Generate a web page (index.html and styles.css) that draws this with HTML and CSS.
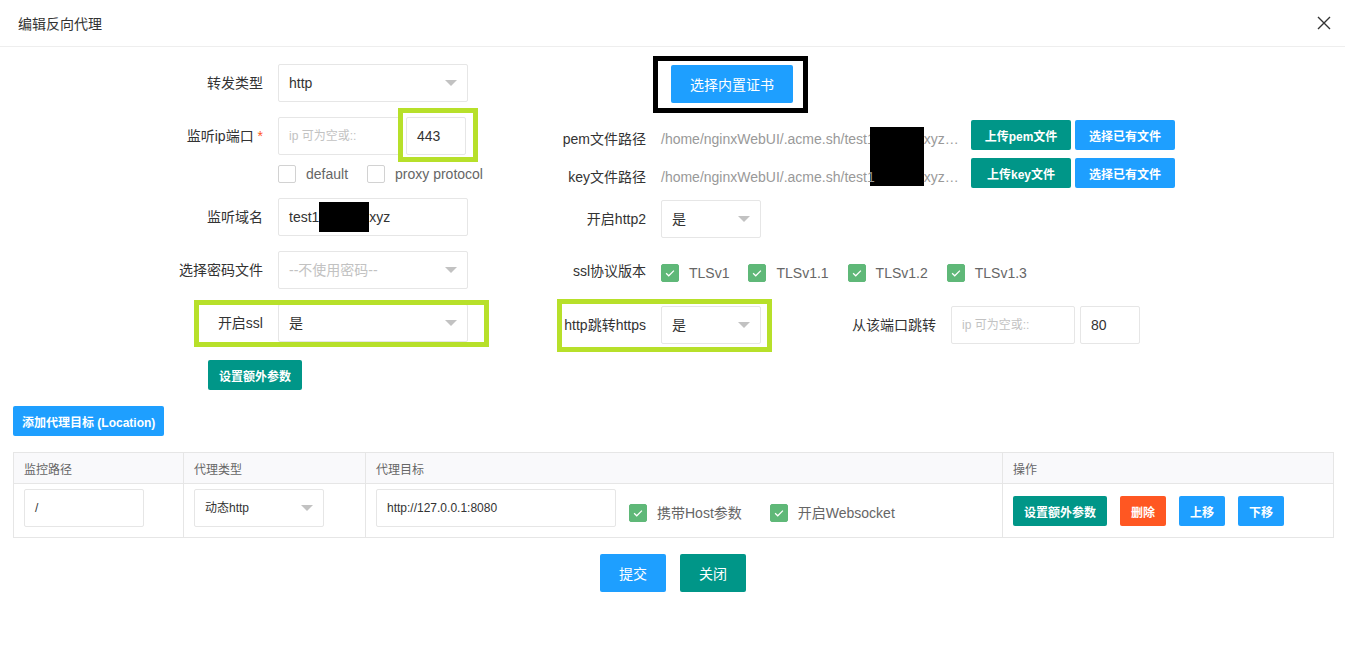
FILE: index.html
```html
<!DOCTYPE html>
<html lang="zh-CN">
<head>
<meta charset="utf-8">
<title>编辑反向代理</title>
<link rel="stylesheet" href="styles.css">
</head>
<body>
<div class="dialog">
  <div class="dlg-title">
    <span>编辑反向代理</span>
    <span class="dlg-close"><svg width="14" height="14" viewBox="0 0 14 14"><path d="M1 1L13 13M13 1L1 13" stroke="#333" stroke-width="1.4" fill="none"/></svg></span>
  </div>
  <div class="dlg-body">
    <div class="top">
      <div class="col-left">
        <div class="form-row">
          <label class="lbl">转发类型</label>
          <div class="select w190"><span>http</span><i class="edge"></i></div>
        </div>
        <div class="form-row mt15">
          <label class="lbl">监听ip端口 <span class="req">*</span></label>
          <div class="pair">
            <div class="input w124 ph">ip 可为空或::</div>
            <div class="annot-wrap">
              <div class="input w60">443</div>
              <span class="annot lime port-annot"></span>
            </div>
          </div>
        </div>
        <div class="check-row">
          <span class="cb"></span><span class="cb-text">default</span>
          <span class="cb"></span><span class="cb-text">proxy protocol</span>
        </div>
        <div class="form-row mt15">
          <label class="lbl">监听域名</label>
          <div class="input w190">test1<span class="redact-inline"></span>xyz</div>
        </div>
        <div class="form-row mt15">
          <label class="lbl">选择密码文件</label>
          <div class="select w190 disabled"><span>--不使用密码--</span><i class="edge"></i></div>
        </div>
        <div class="form-row mt15 annot-wrap">
          <label class="lbl">开启ssl</label>
          <div class="select w190"><span>是</span><i class="edge"></i></div>
          <span class="annot lime ssl-annot"></span>
        </div>
        <div class="extra-row">
          <button class="btn btn-sm teal">设置额外参数</button>
        </div>
      </div>

      <div class="col-mid">
        <div class="cert-row">
          <span class="annot-wrap">
            <button class="btn blue">选择内置证书</button>
            <span class="annot black cert-annot"></span>
          </span>
        </div>
        <div class="form-row pem-row">
          <label class="lbl">pem文件路径</label>
          <div class="path">/home/nginxWebUI/.acme.sh/test1<span class="gap"></span>xyz…<span class="redact-block"></span></div>
          <div class="file-btns">
            <button class="btn btn-sm btn-file teal">上传pem文件</button>
            <button class="btn btn-sm btn-file blue">选择已有文件</button>
          </div>
        </div>
        <div class="form-row">
          <label class="lbl">key文件路径</label>
          <div class="path">/home/nginxWebUI/.acme.sh/test1<span class="gap"></span>xyz…</div>
          <div class="file-btns">
            <button class="btn btn-sm btn-file teal">上传key文件</button>
            <button class="btn btn-sm btn-file blue">选择已有文件</button>
          </div>
        </div>
        <div class="form-row http2-row">
          <label class="lbl">开启http2</label>
          <div class="select w100"><span>是</span><i class="edge"></i></div>
        </div>
        <div class="form-row ssl-row">
          <label class="lbl">ssl协议版本</label>
          <div class="cb-group">
            <span class="cb on"><svg viewBox="0 0 18 18"><path d="M4.6 9.2L7.6 12.1L13.4 6.3" stroke="#fff" stroke-width="1.4" fill="none"/></svg></span><span class="cb-text">TLSv1</span>
            <span class="cb on"><svg viewBox="0 0 18 18"><path d="M4.6 9.2L7.6 12.1L13.4 6.3" stroke="#fff" stroke-width="1.4" fill="none"/></svg></span><span class="cb-text">TLSv1.1</span>
            <span class="cb on"><svg viewBox="0 0 18 18"><path d="M4.6 9.2L7.6 12.1L13.4 6.3" stroke="#fff" stroke-width="1.4" fill="none"/></svg></span><span class="cb-text">TLSv1.2</span>
            <span class="cb on"><svg viewBox="0 0 18 18"><path d="M4.6 9.2L7.6 12.1L13.4 6.3" stroke="#fff" stroke-width="1.4" fill="none"/></svg></span><span class="cb-text">TLSv1.3</span>
          </div>
        </div>
        <div class="form-row https-row">
          <div class="form-row annot-wrap">
            <label class="lbl">http跳转https</label>
            <div class="select w100"><span>是</span><i class="edge"></i></div>
            <span class="annot lime https-annot"></span>
          </div>
          <div class="form-row jump-group">
            <label class="lbl">从该端口跳转</label>
            <div class="pair pair-5">
              <div class="input w124 ph">ip 可为空或::</div>
              <div class="input w60">80</div>
            </div>
          </div>
        </div>
      </div>
    </div>

    <div class="loc-bar">
      <button class="btn btn-sm btn-loc blue">添加代理目标 (Location)</button>
    </div>

    <table class="loc-table">
      <colgroup>
        <col class="c1"><col class="c2"><col class="c3"><col class="c4">
      </colgroup>
      <thead>
        <tr><th>监控路径</th><th>代理类型</th><th>代理目标</th><th>操作</th></tr>
      </thead>
      <tbody>
        <tr>
          <td><div class="input sm w120">/</div></td>
          <td><div class="select sm w130"><span>动态http</span><i class="edge"></i></div></td>
          <td>
            <div class="target-cell">
              <div class="input sm w240">http://127.0.0.1:8080</div>
              <span class="cb on tcb"><svg viewBox="0 0 18 18"><path d="M4.6 9.2L7.6 12.1L13.4 6.3" stroke="#fff" stroke-width="1.4" fill="none"/></svg></span><span class="cb-text tcb-text">携带Host参数</span>
              <span class="cb on tcb"><svg viewBox="0 0 18 18"><path d="M4.6 9.2L7.6 12.1L13.4 6.3" stroke="#fff" stroke-width="1.4" fill="none"/></svg></span><span class="cb-text tcb-text">开启Websocket</span>
            </div>
          </td>
          <td>
            <div class="ops">
              <button class="btn btn-sm teal">设置额外参数</button>
              <button class="btn btn-sm orange">删除</button>
              <button class="btn btn-sm blue">上移</button>
              <button class="btn btn-sm blue">下移</button>
            </div>
          </td>
        </tr>
      </tbody>
    </table>

    <div class="footer">
      <button class="btn blue">提交</button>
      <button class="btn teal">关闭</button>
    </div>
  </div>
</div>
</body>
</html>
```

FILE: styles.css
```css
* { box-sizing: border-box; }
html, body { margin: 0; padding: 0; background: #fff; }
body {
  font-family: "Liberation Sans", "Noto Sans CJK SC", sans-serif;
  font-size: 14px;
  color: #333;
}
.dialog { width: 1345px; min-height: 661px; background: #fff; }

.dlg-title {
  height: 47px;
  border-bottom: 1px solid #eee;
  display: flex;
  align-items: center;
  justify-content: space-between;
  padding: 0 14px 0 18px;
  font-size: 14px;
  color: #333;
}
.dlg-close svg { display: block; }

.dlg-body { padding: 17px 12px 0 13px; }

.top { display: flex; align-items: flex-start; }
.col-left { margin-left: 155px; width: 300px; flex: none; }
.col-mid { margin-left: 83px; flex: none; }

.form-row { display: flex; align-items: flex-start; }
.mt15 { margin-top: 15px; }

.lbl {
  width: 110px;
  flex: none;
  padding: 9px 15px 9px 0;
  line-height: 20px;
  text-align: right;
  white-space: nowrap;
  color: #333;
}
.req { color: #ff5722; }

.input, .select {
  height: 38px;
  border: 1px solid #e6e6e6;
  border-radius: 2px;
  padding: 0 10px;
  line-height: 36px;
  background: #fff;
  white-space: nowrap;
  overflow: hidden;
  color: #333;
  flex: none;
}
.select { position: relative; }
.select.disabled { color: #c2c2c2; }
.ph { color: #c2c2c2; font-size: 12px; }
.sm { font-size: 12px; }
.w60 { width: 60px; }
.w100 { width: 100px; }
.w120 { width: 120px; }
.w124 { width: 124px; }
.w130 { width: 130px; }
.w190 { width: 190px; }
.w240 { width: 240px; }

.edge {
  position: absolute;
  right: 10px;
  top: 50%;
  margin-top: -3px;
  width: 0;
  height: 0;
  border-width: 6px;
  border-style: solid;
  border-color: #c2c2c2 transparent transparent transparent;
}

.pair { display: flex; gap: 4px; }
.pair-5 { gap: 5px; }

.annot-wrap { position: relative; }
.annot { position: absolute; pointer-events: none; }
.lime { border: 5px solid #b7e02a; }
.black { border: 5px solid #000; }
.port-annot { left: -8px; right: -12px; top: -9px; bottom: -7px; }
.ssl-annot { left: 26px; right: -21px; top: -4px; bottom: -5px; }
.https-annot { left: 6px; right: -11px; top: -7px; bottom: -8px; }
.cert-annot { left: -18px; right: -15px; top: -9px; bottom: -10px; }

.redact-inline {
  display: inline-block;
  width: 50px;
  height: 30px;
  background: #000;
  vertical-align: middle;
  margin-top: -2px;
}

.check-row {
  display: flex;
  align-items: center;
  height: 18px;
  margin: 10px 0 0 110px;
}
.cb {
  width: 18px;
  height: 18px;
  border: 1px solid #d2d2d2;
  border-radius: 2px;
  background: #fff;
  flex: none;
  display: inline-block;
}
.cb svg { display: block; width: 16px; height: 16px; }
.cb.on { background: #5fb878; border-color: #5fb878; }
.cb-text { margin-left: 10px; margin-right: 19px; color: #666; line-height: 20px; white-space: nowrap; }

.extra-row { margin-top: 18px; padding-left: 40px; }

.btn {
  display: inline-flex;
  align-items: center;
  justify-content: center;
  height: 38px;
  padding: 0 19px;
  border: none;
  border-radius: 2px;
  font-family: "Liberation Sans", "Noto Sans CJK SC", sans-serif;
  font-size: 14px;
  color: #fff;
  white-space: nowrap;
  cursor: pointer;
}
.btn-sm { height: 30px; padding: 0 11px; font-size: 12px; font-weight: bold; }
.btn-file { width: 100px; padding: 0; }
.btn-loc { padding: 0 9px; }
.teal { background: #009688; }
.blue { background: #1e9fff; }
.orange { background: #ff5722; }

.cert-row { margin-top: 1px; padding-left: 120px; }
.cert-row .annot-wrap { display: inline-block; }
.cert-row .btn { display: flex; }

.pem-row { margin-top: 17px; }
.path {
  width: 310px;
  flex: none;
  padding: 9px 0;
  line-height: 20px;
  color: #999;
  white-space: nowrap;
  position: relative;
}
.path .gap { display: inline-block; width: 49px; }
.redact-block {
  position: absolute;
  left: 209px;
  top: 7px;
  width: 54px;
  height: 59px;
  background: #000;
}
.file-btns { display: flex; gap: 4px; }

.http2-row { margin-top: 4px; }
.ssl-row { margin-top: 14px; }
.cb-group { display: flex; align-items: center; margin-top: 11px; }
.https-row { margin-top: 16px; }
.jump-group { margin-left: 80px; }

.loc-bar { margin-top: 16px; }

.loc-table {
  margin-top: 16px;
  width: 1320px;
  border-collapse: collapse;
  table-layout: fixed;
}
.c1 { width: 170px; }
.c2 { width: 182px; }
.c3 { width: 637px; }
.c4 { width: 331px; }
.loc-table th, .loc-table td {
  border: 1px solid #e6e6e6;
  text-align: left;
  vertical-align: top;
}
.loc-table th {
  height: 31px;
  padding: 0 10px;
  background: #f9f9fb;
  font-size: 12px;
  font-weight: normal;
  color: #666;
  vertical-align: middle;
}
.loc-table td { padding: 5px 10px 10px; }
.target-cell { display: flex; align-items: flex-start; }
.tcb { margin-top: 15px; margin-left: 13px; }
.tcb + .tcb-text { margin-top: 14px; }
.tcb-text { margin-right: 0; }
.tcb-text + .tcb { margin-left: 28px; }
.ops { display: flex; gap: 13px; margin-top: 7px; }

.footer { display: flex; justify-content: center; gap: 14px; margin-top: 16px; }
```
